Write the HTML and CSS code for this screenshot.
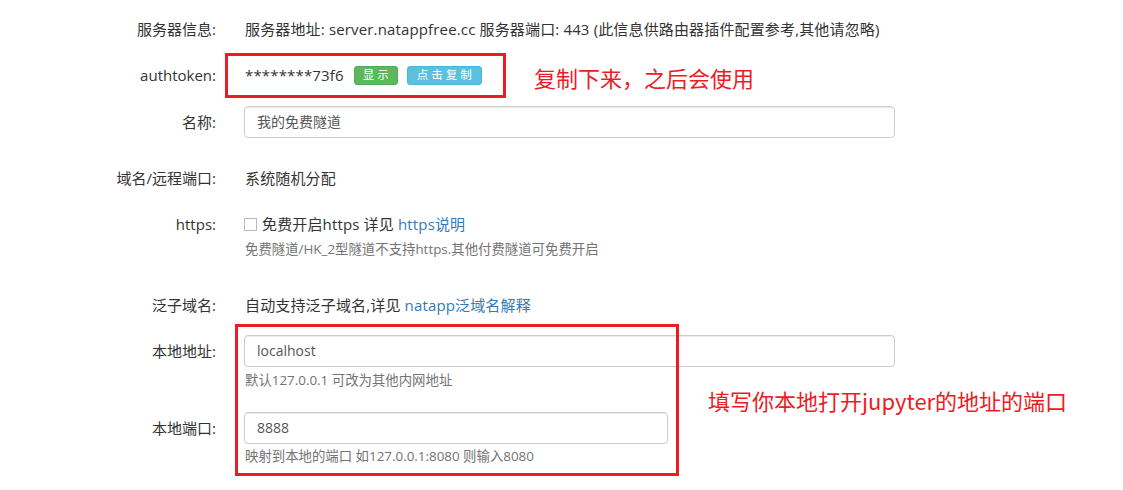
FILE: index.html
```html
<!DOCTYPE html>
<html lang="zh-CN">
<head>
<meta charset="utf-8">
<title>natapp 隧道配置</title>
<link rel="stylesheet" href="styles.css">
</head>
<body>
<div class="page">
  <form class="form">
    <div class="row r1">
      <div class="label">服务器信息:</div>
      <div class="value">服务器地址: server.natappfree.cc 服务器端口: 443 (此信息供路由器插件配置参考,其他请忽略)</div>
    </div>
    <div class="row r2">
      <div class="label">authtoken:</div>
      <div class="value token">
        <span>********73f6</span>
        <span class="btn btn-green">显示</span>
        <span class="btn btn-blue">点击复制</span>
      </div>
    </div>
    <div class="row r3">
      <div class="label label-input">名称:</div>
      <div class="value"><div class="input wide">我的免费隧道</div></div>
    </div>
    <div class="row r4">
      <div class="label">域名/远程端口:</div>
      <div class="value">系统随机分配</div>
    </div>
    <div class="row r5">
      <div class="label">https:</div>
      <div class="value">
        <div class="check-line"><span class="checkbox"></span><span>免费开启https 详见 <a class="link">https说明</a></span></div>
        <div class="help h5">免费隧道/HK_2型隧道不支持https.其他付费隧道可免费开启</div>
      </div>
    </div>
    <div class="row r6">
      <div class="label">泛子域名:</div>
      <div class="value">自动支持泛子域名,详见 <a class="link">natapp泛域名解释</a></div>
    </div>
    <div class="row r7">
      <div class="label label-input">本地地址:</div>
      <div class="value">
        <div class="input wide">localhost</div>
        <div class="help h7">默认127.0.0.1 可改为其他内网地址</div>
      </div>
    </div>
    <div class="row r8">
      <div class="label label-input">本地端口:</div>
      <div class="value">
        <div class="input narrow">8888</div>
        <div class="help h8">映射到本地的端口 如127.0.0.1:8080 则输入8080</div>
      </div>
    </div>
  </form>

  <div class="mark mark-token"></div>
  <div class="note note-token">复制下来，之后会使用</div>
  <div class="mark mark-local"></div>
  <div class="note note-local">填写你本地打开jupyter的地址的端口</div>
</div>
</body>
</html>
```

FILE: styles.css
```css
* { box-sizing: border-box; }
html, body { margin: 0; padding: 0; background: #fff; }
body {
  font-family: "Open Sans", "Noto Sans CJK SC", sans-serif;
  font-size: 15px;
  color: #333;
}
.page { position: relative; width: 1123px; height: 490px; overflow: hidden; }
.form { padding-top: 19px; }
.row {
  display: grid;
  grid-template-columns: 216px 651px;
  column-gap: 28px;
  align-items: start;
}
.label { text-align: right; line-height: 20px; }
.label-input { line-height: 32px; }
.value { line-height: 20px; padding-left: 1px; white-space: nowrap; letter-spacing: 0.15px; }
.r2 { margin-top: 26px; }
.r3 { margin-top: 21px; }
.r4 { margin-top: 30px; }
.r5 { margin-top: 26px; }
.r6 { margin-top: 36px; }
.r7 { margin-top: 20px; }
.r8 { margin-top: 22px; }

.token { display: flex; align-items: center; height: 20px; }
.btn {
  display: inline-flex; align-items: center; justify-content: center;
  height: 19px; color: #fff; font-size: 11.5px; letter-spacing: 3px;
  border-radius: 3px; padding-left: 3px;
}
.btn-green { background: #5cb85c; border: 1px solid #4cae4c; width: 44px; margin-left: 10px; }
.btn-blue { background: #5bc0de; border: 1px solid #46b8da; width: 75px; margin-left: 9px; }

.input {
  height: 32px; border: 1px solid #ccc; border-radius: 4px;
  padding: 0 12px; line-height: 30px; color: #555; font-size: 14px;
  margin-left: -1px; letter-spacing: 0;
  box-shadow: inset 0 1px 1px rgba(0,0,0,.075);
}
.wide { width: 651px; }
.narrow { width: 424px; }

.check-line { display: flex; align-items: center; }
.checkbox {
  width: 13px; height: 13px; border: 1px solid #bbb; background: #fff;
  margin-right: 5px; margin-left: -1px;
}
.link { color: #337ab7; text-decoration: none; }
.help { color: #737373; font-size: 13.4px; line-height: 20px; letter-spacing: 0; }
.h5 { margin-top: 5px; }
.h7 { margin-top: 3px; }
.h8 { margin-top: 2px; }

.mark { position: absolute; border: 3px solid #ed1c24; }
.mark-token { left: 225px; top: 53px; width: 281px; height: 45px; }
.mark-local { left: 235px; top: 324px; width: 444px; height: 152px; }
.note {
  position: absolute; color: #ed1c24; font-size: 22px; line-height: 28px;
  font-family: "Noto Sans CJK SC", sans-serif; white-space: nowrap;
}
.note-token { left: 534px; top: 63px; }
.note-local { left: 708px; top: 386px; }
```
